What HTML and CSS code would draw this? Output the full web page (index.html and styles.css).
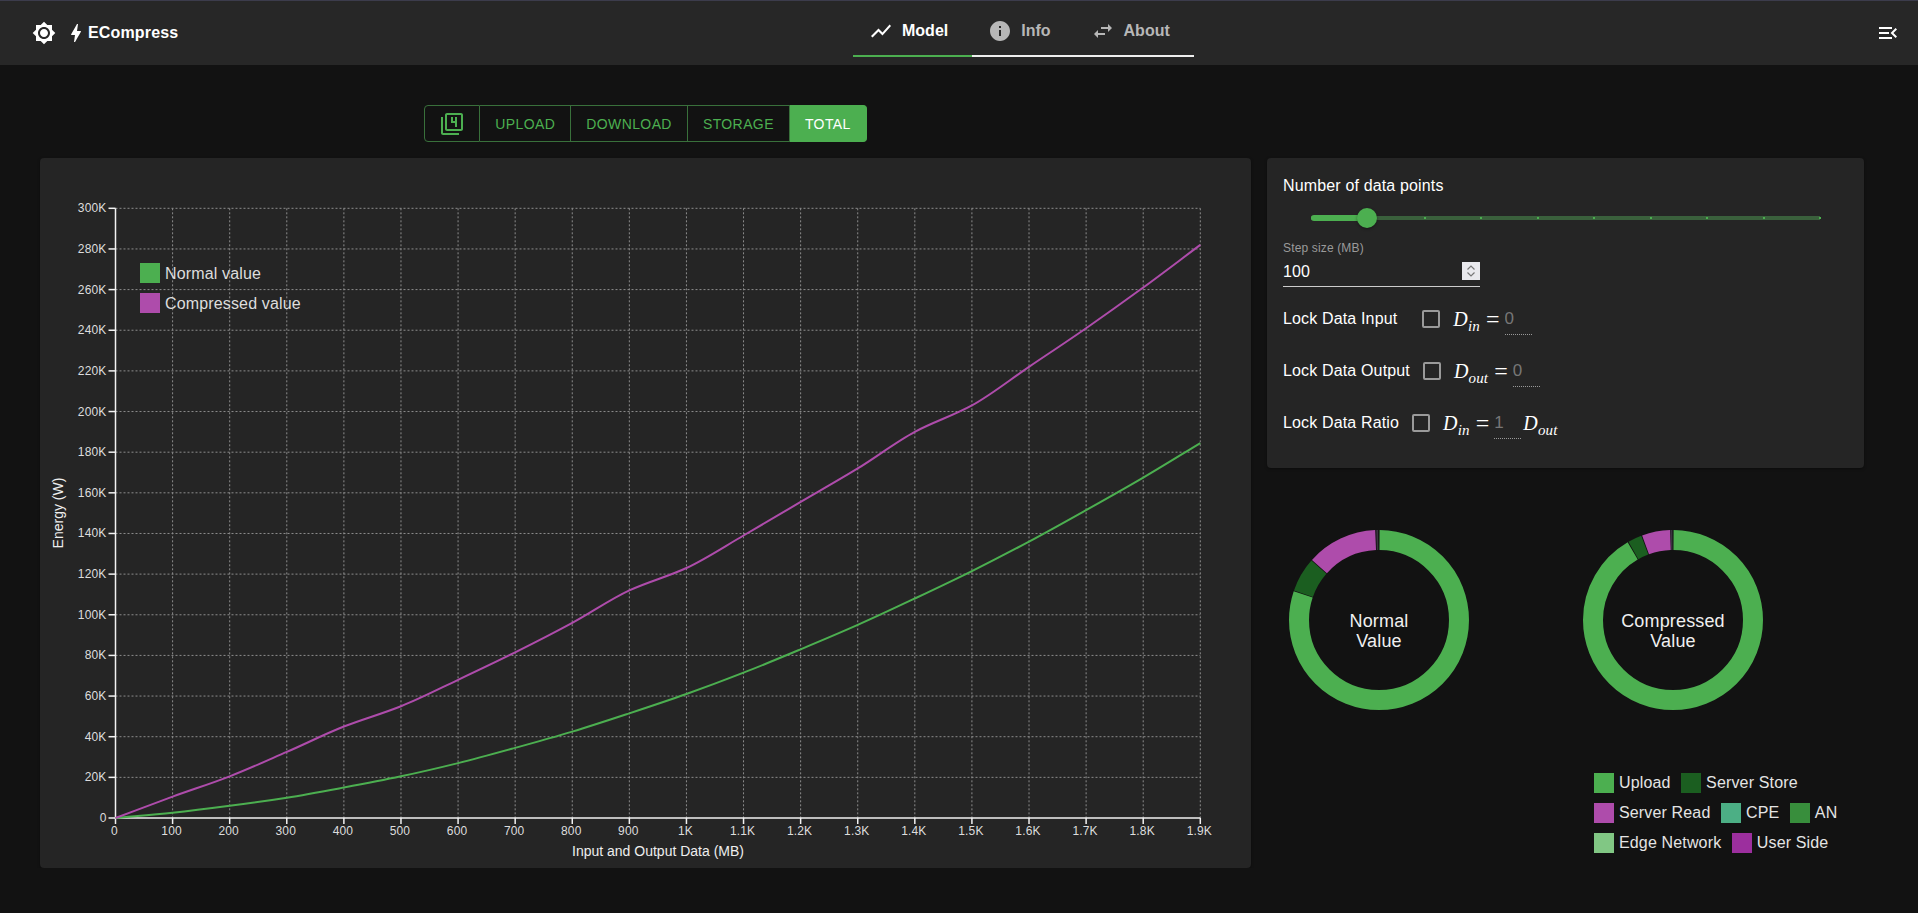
FILE: index.html

```html
<!DOCTYPE html>
<html>

<head>
    <meta charset="utf-8">
    <title>ECompress</title>
    <link rel="stylesheet" href="styles.css">
</head>

<body>
<header class="appbar">
    <div class="brand">
        <svg class="icon" viewBox="0 0 24 24"><path d="M20 8.69V4h-4.69L12 .69 8.69 4H4v4.69L.69 12 4 15.31V20h4.69L12 23.31 15.31 20H20v-4.69L23.31 12 20 8.69zM12 18c-3.31 0-6-2.69-6-6s2.69-6 6-6 6 2.69 6 6-2.69 6-6 6zm0-10c-2.21 0-4 1.79-4 4s1.79 4 4 4 4-1.79 4-4-1.79-4-4-4z"/></svg>
        <svg class="icon bolt" viewBox="0 0 24 24"><path d="M11 21h-1l1-7H7.5c-.58 0-.57-.32-.38-.66.19-.34.05-.08.07-.12C8.48 10.94 10.42 7.54 13 3h1l-1 7h3.5c.49 0 .56.33.47.51l-.07.15C12.96 17.55 11 21 11 21z"/></svg>
        <span class="brand-name">ECompress</span>
    </div>
    <nav class="tabs">
        <a class="tab active">
            <svg class="icon" viewBox="0 0 24 24"><path d="M3.5 18.49l6-6.01 4 4L22 6.92l-1.41-1.41-7.09 7.97-4-4L2 16.99z"/></svg>
            Model
        </a>
        <a class="tab">
            <svg class="icon" viewBox="0 0 24 24"><path d="M12 2C6.48 2 2 6.48 2 12s4.48 10 10 10 10-4.48 10-10S17.52 2 12 2zm1 15h-2v-6h2v6zm0-8h-2V7h2v2z"/></svg>
            Info
        </a>
        <a class="tab">
            <svg class="icon" viewBox="0 0 24 24"><path d="M6.99 11L3 15l3.99 4v-3H14v-2H6.99v-3zM21 9l-3.99-4v3H10v2h7.01v3L21 9z"/></svg>
            About
        </a>
    </nav>
    <svg class="icon menu-btn" viewBox="0 0 24 24"><path d="M3 18h13v-2H3v2zm0-5h10v-2H3v2zm0-7v2h13V6H3zm18 9.59L17.42 12 21 8.41 19.59 7l-5 5 5 5L21 15.59z"/></svg>
</header>

<main class="page">
    <div class="toggle-group">
        <button class="toggle toggle-icon">
            <svg class="icon" viewBox="0 0 24 24"><path d="M3 5H1v16c0 1.1.9 2 2 2h16v-2H3V5zm12 10h2V5h-2v4h-2V5h-2v6h4v4zm6-14H7c-1.1 0-2 .9-2 2v14c0 1.1.9 2 2 2h14c1.1 0 2-.9 2-2V3c0-1.1-.9-2-2-2zm0 16H7V3h14v14z"/></svg>
        </button>
        <button class="toggle">Upload</button>
        <button class="toggle">Download</button>
        <button class="toggle">Storage</button>
        <button class="toggle selected">Total</button>
    </div>

    <section class="card chart-card">
        <svg id="chart" class="chart" width="1211" height="710"></svg>
    </section>

    <div class="side">
        <section class="card controls">
            <div class="controls-title">Number of data points</div>
            <div class="slider">
                <div class="slider-rail"></div>
                <div class="slider-track"></div>
                <div class="slider-marks">
                    <i></i><i></i><i></i><i></i><i></i><i></i><i></i><i></i><i></i><i></i>
                </div>
                <div class="slider-thumb"></div>
            </div>
            <div class="step-label">Step size (MB)</div>
            <div class="step-input">
                <input type="text" value="100">
                <span class="spin">
                    <svg viewBox="0 0 18 18"><path d="M5.5 7.5L9 4l3.5 3.5M5.5 10.5L9 14l3.5-3.5"/></svg>
                </span>
            </div>

            <div class="lock-row">
                <span class="lock-label wide">Lock Data Input</span>
                <input class="check" type="checkbox">
                <span class="math"><i>D<sub>in</sub></i><b>=</b></span>
                <input class="math-input" type="text" value="0">
            </div>
            <div class="lock-row">
                <span class="lock-label">Lock Data Output</span>
                <input class="check" type="checkbox">
                <span class="math"><i>D<sub>out</sub></i><b>=</b></span>
                <input class="math-input" type="text" value="0">
            </div>
            <div class="lock-row">
                <span class="lock-label">Lock Data Ratio</span>
                <input class="check" type="checkbox">
                <span class="math"><i>D<sub>in</sub></i><b>=</b></span>
                <input class="math-input" type="text" value="1">
                <span class="math"><i>D<sub>out</sub></i></span>
            </div>
        </section>

        <div class="donuts">
            <svg class="donut" width="200" height="200" viewBox="0 0 200 200">
                <g transform="rotate(-90 100 100)">
                    <circle class="seg c-upload" cx="100" cy="100" r="80" pathLength="360" stroke-dasharray="288.3 71.7" stroke-dashoffset="-0.4"/>
                    <circle class="seg c-store" cx="100" cy="100" r="80" pathLength="360" stroke-dasharray="22.1 337.9" stroke-dashoffset="-289.2"/>
                    <circle class="seg c-read" cx="100" cy="100" r="80" pathLength="360" stroke-dasharray="45.6 314.4" stroke-dashoffset="-311.9"/>
                    <circle class="seg c-sliver" cx="100" cy="100" r="80" pathLength="360" stroke-dasharray="1.2 358.8" stroke-dashoffset="-358.2"/>
                </g>
                <text class="donut-text" x="100" y="100.5">Normal</text>
                <text class="donut-text" x="100" y="121">Value</text>
            </svg>
            <svg class="donut" width="200" height="200" viewBox="0 0 200 200">
                <g transform="rotate(-90 100 100)">
                    <circle class="seg c-upload" cx="100" cy="100" r="80" pathLength="360" stroke-dasharray="329.3 30.7" stroke-dashoffset="-0.4"/>
                    <circle class="seg c-store" cx="100" cy="100" r="80" pathLength="360" stroke-dasharray="9 351" stroke-dashoffset="-330.3"/>
                    <circle class="seg c-read" cx="100" cy="100" r="80" pathLength="360" stroke-dasharray="18.2 341.8" stroke-dashoffset="-339.9"/>
                    <circle class="seg c-sliver" cx="100" cy="100" r="80" pathLength="360" stroke-dasharray="1.2 358.8" stroke-dashoffset="-358.4"/>
                </g>
                <text class="donut-text" x="100" y="100.5">Compressed</text>
                <text class="donut-text" x="100" y="121">Value</text>
            </svg>
        </div>

        <div class="legend">
            <div class="legend-row">
                <span class="legend-item"><i class="swatch upload"></i>Upload</span>
                <span class="legend-item"><i class="swatch store"></i>Server Store</span>
            </div>
            <div class="legend-row">
                <span class="legend-item"><i class="swatch read"></i>Server Read</span>
                <span class="legend-item"><i class="swatch cpe"></i>CPE</span>
                <span class="legend-item"><i class="swatch an"></i>AN</span>
            </div>
            <div class="legend-row">
                <span class="legend-item"><i class="swatch edge"></i>Edge Network</span>
                <span class="legend-item"><i class="swatch user"></i>User Side</span>
            </div>
        </div>
    </div>
</main>
<script src="chart.js"></script>
</body>

</html>
```

FILE: styles.css

```css
* {
    margin: 0px;
    padding: 0px;
    box-sizing: border-box;
}
body {
    background: #121212;
    color: #fff;
    font-family: "Liberation Sans", Arial, sans-serif;
    font-size: 16px;
    letter-spacing: 0.15px;
    overflow: hidden;
}
.icon {
    width: 24px;
    height: 24px;
    fill: currentColor;
    flex: none;
}

/* top bar */
.appbar {
    height: 65px;
    background: #272727;
    border-top: 1px solid #3c3c4c;
    display: grid;
    grid-template-columns: 853px auto 1fr;
    align-items: center;
}
.brand {
    display: flex;
    align-items: center;
    padding-left: 32px;
}
.bolt {
    margin-left: 8px;
}
.brand-name {
    font-weight: bold;
}
.tabs {
    display: flex;
    align-self: start;
}
.tab {
    height: 56px;
    padding: 6px 24px 0 16px;
    display: flex;
    align-items: center;
    gap: 9px;
    font-weight: bold;
    letter-spacing: 0;
    color: #b7b7b7;
    border-bottom: 2px solid #eee;
}
.tab.active {
    color: #fff;
    border-bottom-color: #4caf50;
}
.menu-btn {
    justify-self: end;
    margin-right: 18px;
}

/* page */
.page {
    display: grid;
    grid-template-columns: 1211px 597px;
    column-gap: 16px;
    row-gap: 16px;
    padding: 40px 0 0 40px;
}
.card {
    background: #252525;
    border-radius: 4px;
    box-shadow: 0 1px 3px rgba(0, 0, 0, 0.4);
}

/* toggle buttons */
.toggle-group {
    grid-column: 1;
    justify-self: center;
    display: flex;
    height: 37px;
}
.toggle {
    background: none;
    color: #4caf50;
    font-family: inherit;
    font-size: 14px;
    letter-spacing: 0.4px;
    text-transform: uppercase;
    padding: 0 15px;
    border: 1px solid #39703b;
    border-left: 0;
}
.toggle-icon {
    width: 56px;
    padding: 0;
    border-left: 1px solid #39703b;
    border-radius: 4px 0 0 4px;
    display: flex;
    align-items: center;
    justify-content: center;
}
.toggle.selected {
    background: #4caf50;
    color: #fff;
    border-color: #4caf50;
    border-radius: 0 4px 4px 0;
}

/* chart */
.chart-card {
    grid-column: 1;
    height: 710px;
}
.chart {
    display: block;
}
.grid-line {
    stroke: #8c8c8c;
    stroke-width: 1;
    stroke-dasharray: 2 2;
}
.axis-line {
    stroke: #f2f2f2;
    stroke-width: 1.5;
}
.tick-text {
    fill: #ddd;
    font-size: 12px;
}
.axis-title {
    fill: #eee;
    font-size: 14px;
    letter-spacing: 0;
    text-anchor: middle;
}
.chart-legend {
    fill: #ddd;
    font-size: 16px;
}
.line {
    fill: none;
    stroke-width: 2;
}
.line-normal {
    stroke: #4caf50;
}
.line-compressed {
    stroke: #ae4cab;
}
.key-normal {
    fill: #4caf50;
}
.key-compressed {
    fill: #ae4cab;
}

/* controls */
.side {
    grid-column: 2;
}
.controls {
    height: 310px;
    padding: 17px 0 0 16px;
}
.controls-title {
    line-height: 22px;
}
.slider {
    position: relative;
    width: 509px;
    height: 20px;
    margin: 11px 0 0 28px;
}
.slider-rail {
    position: absolute;
    top: 8px;
    left: 0;
    right: 0;
    height: 4px;
    background: #3a603c;
}
.slider-track {
    position: absolute;
    top: 7px;
    left: 0;
    width: 56px;
    height: 6px;
    background: #4caf50;
    border-radius: 3px 0 0 3px;
}
.slider-marks {
    position: absolute;
    top: 9px;
    left: 0;
    right: -1px;
    display: flex;
    justify-content: space-between;
}
.slider-marks i {
    width: 2px;
    height: 2px;
    background: #4caf50;
}
.slider-thumb {
    position: absolute;
    top: 0;
    left: 46px;
    width: 20px;
    height: 20px;
    border-radius: 50%;
    background: #4caf50;
    box-shadow: 0 1px 3px rgba(0, 0, 0, 0.4);
}
.step-label {
    margin-top: 13px;
    font-size: 12px;
    line-height: 14px;
    color: #9a9a9a;
}
.step-input {
    display: flex;
    width: 197px;
    height: 25px;
    margin-top: 7px;
    border-bottom: 1px solid #ccc;
}
.step-input input {
    flex: 1;
    min-width: 0;
    height: 18px;
    padding-top: 1px;
    background: none;
    border: 0;
    color: #fff;
    font: inherit;
    letter-spacing: inherit;
}
.spin {
    width: 18px;
    height: 18px;
    background: #e9e9ed;
}
.spin svg {
    display: block;
    fill: none;
    stroke: #777;
    stroke-width: 1.2;
}
.lock-row {
    display: flex;
    align-items: center;
    height: 52px;
}
.step-input + .lock-row {
    margin-top: 6px;
}
.lock-label {
    margin-right: 13px;
}
.lock-label.wide {
    margin-right: 25px;
}
.check {
    appearance: none;
    width: 18px;
    height: 18px;
    border: 2px solid #9a9a9a;
    border-radius: 2px;
    margin-right: 13px;
    flex: none;
}
.math {
    display: flex;
    align-items: center;
    font-family: "Liberation Serif", "DejaVu Serif", serif;
    font-size: 20px;
    white-space: nowrap;
}
.math i {
    display: block;
}
.math sub {
    font-size: 15px;
    line-height: 0;
}
.math b {
    font-weight: normal;
    font-size: 24px;
    margin: 0 5px 0 6px;
}
.math-input {
    width: 27px;
    height: 32px;
    margin-right: 2px;
    background: none;
    border: 0;
    border-bottom: 1px dotted #999;
    color: #777;
    font: inherit;
    font-size: 17px;
}

/* donuts */
.donuts {
    display: flex;
    gap: 94px;
    margin-top: 52px;
    padding-left: 12px;
}
.seg {
    fill: none;
    stroke-width: 20;
}
.c-upload {
    stroke: #4caf50;
}
.c-store {
    stroke: #1b5e20;
}
.c-read {
    stroke: #ae4cab;
}
.c-sliver {
    stroke: #3a3340;
}
.donut-text {
    fill: #f0f0f0;
    font-size: 18px;
    text-anchor: middle;
    dominant-baseline: central;
}

/* legend */
.legend {
    margin-top: 53px;
    padding-left: 327px;
    display: flex;
    flex-direction: column;
    gap: 10px;
    color: #e4e4e4;
}
.legend-row {
    display: flex;
    gap: 10.5px;
}
.legend-item {
    display: flex;
    align-items: center;
    height: 20px;
    gap: 5px;
}
.swatch {
    width: 20px;
    height: 20px;
}
.swatch.upload {
    background: #4caf50;
}
.swatch.store {
    background: #1b5e20;
}
.swatch.read {
    background: #ae4cab;
}
.swatch.cpe {
    background: #4caf85;
}
.swatch.an {
    background: #388e3c;
}
.swatch.edge {
    background: #81c784;
}
.swatch.user {
    background: #9c2f9e;
}
```

FILE: chart.js

```js
var svg = document.getElementById("chart");
var NS = "http://www.w3.org/2000/svg";
var left = 75.5, right = 1160.3, top_ = 50.3, bottom = 660;

// values in thousands, one every 100 MB
var normal = [0, 2.6, 6, 10, 15, 20.5, 27, 34.5, 42.5, 51.5, 61, 71.5, 83, 95, 108, 121.5, 136, 151.5, 167.5, 184.5];
var compressed = [0, 10.5, 20.5, 32.5, 45, 55, 68, 81.5, 96, 112, 123, 139, 155.5, 172, 190, 203, 222, 241, 261, 282];

function add(tag, attrs, text) {
    var el = document.createElementNS(NS, tag);
    for (var k in attrs) {
        el.setAttribute(k, attrs[k]);
    }
    if (text !== undefined) {
        el.textContent = text;
    }
    svg.appendChild(el);
    return el;
}

function xAt(i) {
    return left + (right - left) * i / 19;
}

function yAt(v) {
    return bottom - (bottom - top_) * v / 300;
}

function xLabel(i) {
    if (i == 0) return "0";
    if (i < 10) return i * 100 + "";
    if (i == 10) return "1K";
    return (i / 10) + "K";
}

// grid first, so the lines and legend lie over it
for (var i = 1; i <= 19; i++) {
    add("line", { "class": "grid-line", x1: xAt(i), x2: xAt(i), y1: top_, y2: bottom });
}
for (var j = 1; j <= 15; j++) {
    add("line", { "class": "grid-line", x1: left, x2: right, y1: yAt(j * 20), y2: yAt(j * 20) });
}

for (var i = 0; i <= 19; i++) {
    add("line", { "class": "axis-line", x1: xAt(i), x2: xAt(i), y1: bottom, y2: bottom + 6 });
    add("text", { "class": "tick-text", x: xAt(i) - 1, y: bottom + 17, "text-anchor": "middle" }, xLabel(i));
}
for (var j = 0; j <= 15; j++) {
    add("line", { "class": "axis-line", x1: left - 7, x2: left, y1: yAt(j * 20), y2: yAt(j * 20) });
    add("text", { "class": "tick-text", x: left - 9, y: yAt(j * 20) + 4, "text-anchor": "end" }, j == 0 ? "0" : j * 20 + "K");
}
add("line", { "class": "axis-line", x1: left, x2: left, y1: top_, y2: bottom + 1 });
add("line", { "class": "axis-line", x1: left, x2: right, y1: bottom, y2: bottom });

add("text", { "class": "axis-title", x: 618, y: 698 }, "Input and Output Data (MB)");
add("text", { "class": "axis-title", transform: "translate(23 355) rotate(-90)" }, "Energy (W)");

// monotone curve through the points
function curve(vals) {
    var n = vals.length, h = xAt(1) - xAt(0), m = [], d = "";
    for (var i = 0; i < n; i++) {
        var a = i > 0 ? vals[i] - vals[i - 1] : vals[1] - vals[0];
        var b = i < n - 1 ? vals[i + 1] - vals[i] : a;
        m[i] = a * b <= 0 ? 0 : 2 * a * b / (a + b);
    }
    d = "M" + xAt(0) + " " + yAt(vals[0]);
    for (var i = 1; i < n; i++) {
        d += "C" + (xAt(i - 1) + h / 3) + " " + yAt(vals[i - 1] + m[i - 1] / 3) + " "
            + (xAt(i) - h / 3) + " " + yAt(vals[i] - m[i] / 3) + " "
            + xAt(i) + " " + yAt(vals[i]);
    }
    return d;
}

add("path", { "class": "line line-normal", d: curve(normal) });
add("path", { "class": "line line-compressed", d: curve(compressed) });

add("rect", { "class": "key-normal", x: 100, y: 105, width: 20, height: 20 });
add("rect", { "class": "key-compressed", x: 100, y: 135, width: 20, height: 20 });
add("text", { "class": "chart-legend", x: 125, y: 121 }, "Normal value");
add("text", { "class": "chart-legend", x: 125, y: 151 }, "Compressed value");
```
